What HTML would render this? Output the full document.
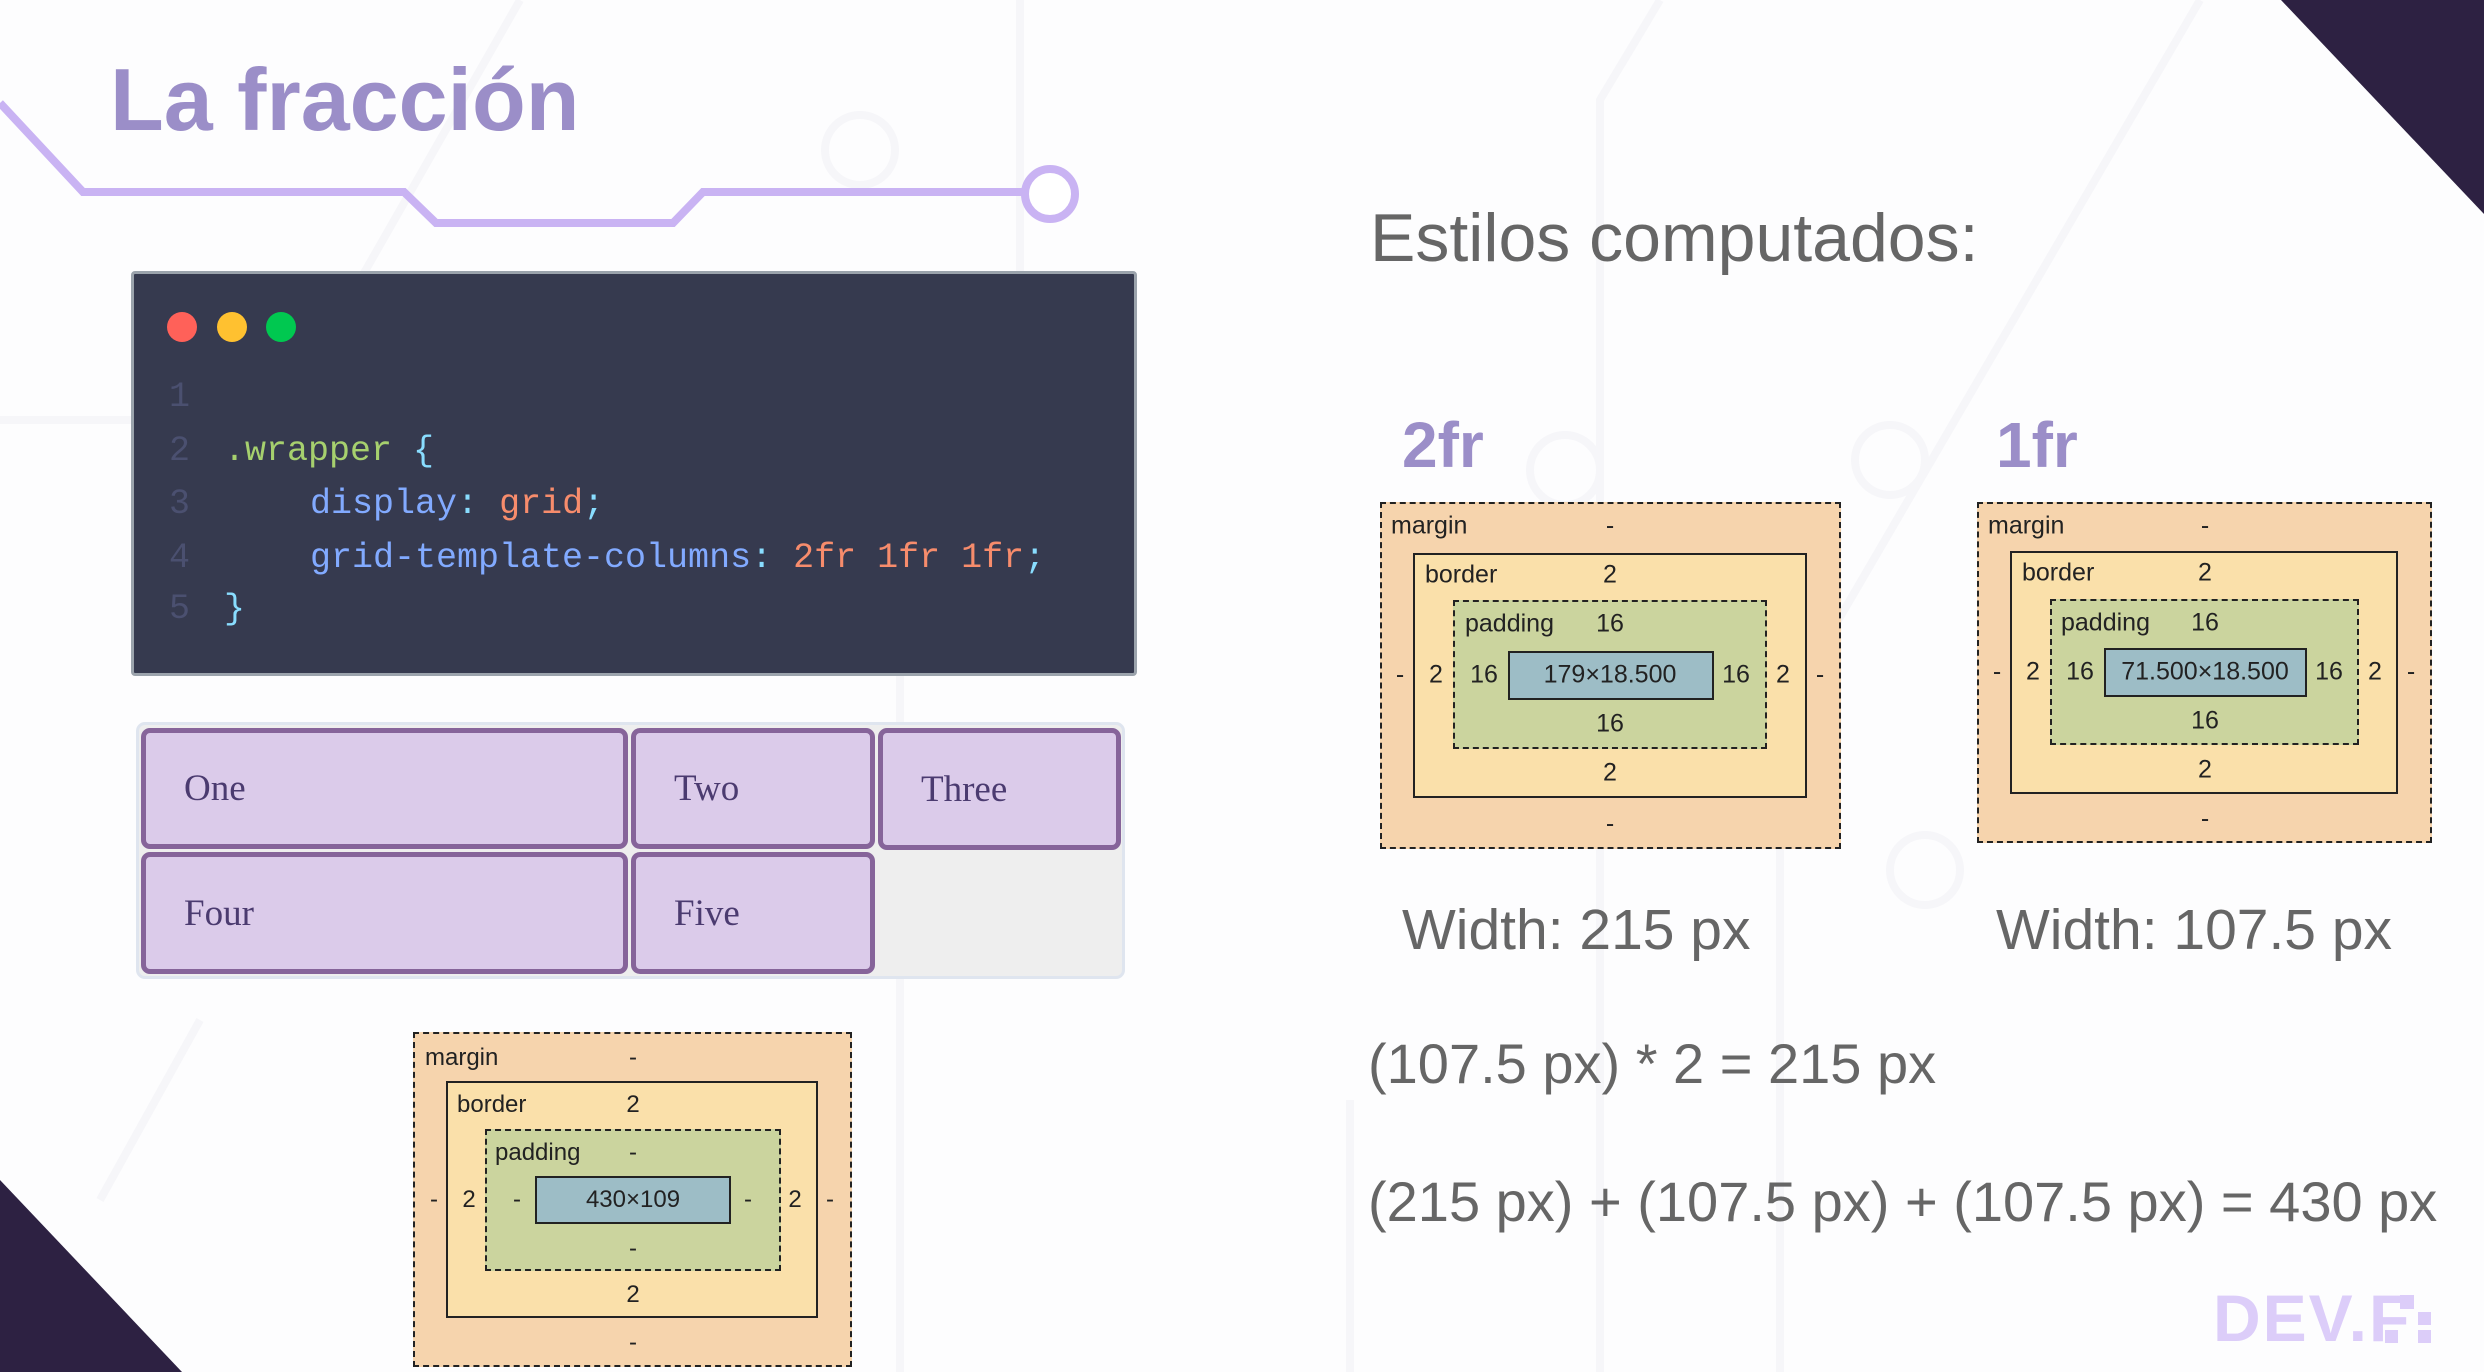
<!DOCTYPE html>
<html><head><meta charset="utf-8">
<style>
*{margin:0;padding:0;box-sizing:border-box}
body{width:2484px;height:1372px;overflow:hidden;background:#fdfdfe;position:relative;font-family:"Liberation Sans",sans-serif}
.a{position:absolute;white-space:nowrap}
.code{font-family:"Liberation Mono",monospace;font-size:35px;line-height:35px}
.cell{position:absolute;background:#dbcbea;border:5px solid #86649a;border-radius:9px;font-family:"Liberation Serif",serif;font-size:37px;color:#4b3b70;padding-left:38px;display:flex;align-items:center}
.bm{position:absolute;font-size:24px;color:#222}
.bm .t{position:absolute;line-height:1;transform:translateY(-50%)}
.c{transform:translate(-50%,-50%)!important}
</style></head><body>
<svg class="a" style="left:0;top:0" width="2484" height="1372">
<g stroke="#f6f6f9" stroke-width="8" fill="none">
<path d="M1020 0 L1020 330 L900 560 L900 1372"/>
<path d="M1660 0 L1600 100 L1600 1372"/>
<path d="M520 0 L280 420 L0 420"/>
<path d="M2200 0 L1780 720 L1780 1372"/>
<path d="M1350 1100 L1350 1372"/>
<path d="M200 1020 L100 1200"/>
<circle cx="860" cy="150" r="35"/><circle cx="1890" cy="460" r="35"/><circle cx="1925" cy="870" r="35"/><circle cx="1565" cy="470" r="35"/>
</g>
</svg>
<svg class="a" style="left:0;top:0" width="2484" height="1372">
<polygon points="2281,0 2484,0 2484,214" fill="#2d2142"/>
<polygon points="0,1180 0,1372 182,1372" fill="#2d2142"/>
<polyline points="0,103 83,192 404,192 436,223 673,223 703,192 1025,192" fill="none" stroke="#c9b3f3" stroke-width="8"/>
<circle cx="1050" cy="194" r="25" fill="#fff" stroke="#c9b3f3" stroke-width="8"/>
</svg>
<div class="a" style="left:110px;top:50px;font-size:88px;font-weight:bold;color:#9b8ec8;line-height:100px">La fracción</div>

<div class="a" style="left:131px;top:271px;width:1006px;height:405px;background:#363a4f;border:3px solid #9ba3ac;border-radius:4px"></div>
<div class="a" style="left:167px;top:312px;width:30px;height:30px;border-radius:50%;background:#ff6159"></div>
<div class="a" style="left:217px;top:312px;width:30px;height:30px;border-radius:50%;background:#ffc130"></div>
<div class="a" style="left:266px;top:312px;width:30px;height:30px;border-radius:50%;background:#00c850"></div>
<div class="a code" style="left:169px;top:380px;color:#4b5070">1</div>
<div class="a code" style="left:169px;top:434px;color:#4b5070">2</div>
<div class="a code" style="left:169px;top:487px;color:#4b5070">3</div>
<div class="a code" style="left:169px;top:541px;color:#4b5070">4</div>
<div class="a code" style="left:169px;top:592px;color:#4b5070">5</div>
<div class="a code" style="left:224px;top:434px"><span style="color:#a6d06e">.wrapper</span> <span style="color:#89ddff">{</span></div>
<div class="a code" style="left:310px;top:487px"><span style="color:#82aaff">display</span><span style="color:#89ddff">:</span> <span style="color:#f78c6c">grid</span><span style="color:#89ddff">;</span></div>
<div class="a code" style="left:310px;top:541px"><span style="color:#82aaff">grid-template-columns</span><span style="color:#89ddff">:</span> <span style="color:#f78c6c">2fr</span> <span style="color:#f78c6c">1fr</span> <span style="color:#f78c6c">1fr</span><span style="color:#89ddff">;</span></div>
<div class="a code" style="left:224px;top:592px;color:#89ddff">}</div>

<div class="a" style="left:136px;top:722px;width:989px;height:257px;background:#eeeeee;border:3px solid #dfe5ef;border-radius:9px"></div>
<div class="cell" style="left:141px;top:728px;width:487px;height:121px">One</div>
<div class="cell" style="left:631px;top:728px;width:244px;height:121px">Two</div>
<div class="cell" style="left:878px;top:728px;width:243px;height:122px">Three</div>
<div class="cell" style="left:141px;top:852px;width:487px;height:122px">Four</div>
<div class="cell" style="left:631px;top:852px;width:244px;height:122px">Five</div>

<div class="bm" style="left:413px;top:1032px;width:439px;height:335px;background:#f6d4ad;border:2px dashed #222"></div>
<div class="a" style="left:446px;top:1081px;width:372px;height:237px;background:#fae0aa;border:2px solid #222"></div>
<div class="a" style="left:485px;top:1129px;width:296px;height:142px;background:#cbd49e;border:2px dashed #222"></div>
<div class="a" style="left:535px;top:1176px;width:196px;height:48px;background:#9dbdc6;border:2px solid #222"></div>
<div class="bm" style="left:0;top:0">
<span class="t" style="left:425px;top:1058px">margin</span><span class="t c" style="left:633px;top:1058px">-</span>
<span class="t" style="left:457px;top:1105px">border</span><span class="t c" style="left:633px;top:1105px">2</span>
<span class="t" style="left:495px;top:1153px">padding</span><span class="t c" style="left:633px;top:1153px">-</span>
<span class="t c" style="left:633px;top:1200px">430×109</span>
<span class="t c" style="left:434px;top:1200px">-</span><span class="t c" style="left:469px;top:1200px">2</span><span class="t c" style="left:517px;top:1200px">-</span>
<span class="t c" style="left:748px;top:1200px">-</span><span class="t c" style="left:795px;top:1200px">2</span><span class="t c" style="left:830px;top:1200px">-</span>
<span class="t c" style="left:633px;top:1249px">-</span><span class="t c" style="left:633px;top:1295px">2</span><span class="t c" style="left:633px;top:1343px">-</span>
</div>

<div class="a" style="left:1370px;top:198px;font-size:68px;color:#666;line-height:80px">Estilos computados:</div>
<div class="a" style="left:1402px;top:405px;font-size:64px;font-weight:bold;color:#9b8ec8;line-height:80px">2fr</div>
<div class="a" style="left:1996px;top:405px;font-size:64px;font-weight:bold;color:#9b8ec8;line-height:80px">1fr</div>

<div class="a" style="left:1380px;top:502px;width:461px;height:347px;background:#f6d4ad;border:2px dashed #222"></div>
<div class="a" style="left:1413px;top:553px;width:394px;height:245px;background:#fae0aa;border:2px solid #222"></div>
<div class="a" style="left:1453px;top:600px;width:314px;height:149px;background:#cbd49e;border:2px dashed #222"></div>
<div class="a" style="left:1508px;top:651px;width:206px;height:49px;background:#9dbdc6;border:2px solid #222"></div>
<div class="bm" style="left:0;top:0;font-size:25px">
<span class="t" style="left:1391px;top:526px">margin</span><span class="t c" style="left:1610px;top:526px">-</span>
<span class="t" style="left:1425px;top:575px">border</span><span class="t c" style="left:1610px;top:575px">2</span>
<span class="t" style="left:1465px;top:624px">padding</span><span class="t c" style="left:1610px;top:624px">16</span>
<span class="t c" style="left:1610px;top:675px">179×18.500</span>
<span class="t c" style="left:1400px;top:675px">-</span><span class="t c" style="left:1436px;top:675px">2</span><span class="t c" style="left:1484px;top:675px">16</span>
<span class="t c" style="left:1736px;top:675px">16</span><span class="t c" style="left:1783px;top:675px">2</span><span class="t c" style="left:1820px;top:675px">-</span>
<span class="t c" style="left:1610px;top:724px">16</span><span class="t c" style="left:1610px;top:773px">2</span><span class="t c" style="left:1610px;top:824px">-</span>
</div>

<div class="a" style="left:1977px;top:502px;width:455px;height:341px;background:#f6d4ad;border:2px dashed #222"></div>
<div class="a" style="left:2010px;top:551px;width:388px;height:243px;background:#fae0aa;border:2px solid #222"></div>
<div class="a" style="left:2050px;top:599px;width:309px;height:146px;background:#cbd49e;border:2px dashed #222"></div>
<div class="a" style="left:2104px;top:648px;width:203px;height:49px;background:#9dbdc6;border:2px solid #222"></div>
<div class="bm" style="left:0;top:0;font-size:25px">
<span class="t" style="left:1988px;top:526px">margin</span><span class="t c" style="left:2205px;top:526px">-</span>
<span class="t" style="left:2022px;top:573px">border</span><span class="t c" style="left:2205px;top:573px">2</span>
<span class="t" style="left:2061px;top:623px">padding</span><span class="t c" style="left:2205px;top:623px">16</span>
<span class="t c" style="left:2205px;top:672px">71.500×18.500</span>
<span class="t c" style="left:1997px;top:672px">-</span><span class="t c" style="left:2033px;top:672px">2</span><span class="t c" style="left:2080px;top:672px">16</span>
<span class="t c" style="left:2329px;top:672px">16</span><span class="t c" style="left:2375px;top:672px">2</span><span class="t c" style="left:2411px;top:672px">-</span>
<span class="t c" style="left:2205px;top:721px">16</span><span class="t c" style="left:2205px;top:770px">2</span><span class="t c" style="left:2205px;top:819px">-</span>
</div>

<div class="a" style="left:1402px;top:895px;font-size:57px;color:#666;line-height:70px">Width: 215 px</div>
<div class="a" style="left:1996px;top:895px;font-size:57px;color:#666;line-height:70px">Width: 107.5 px</div>
<div class="a" style="left:1368px;top:1029px;font-size:56px;color:#666;line-height:70px">(107.5 px) * 2 = 215 px</div>
<div class="a" style="left:1368px;top:1167px;font-size:56px;color:#666;line-height:70px">(215 px) + (107.5 px) + (107.5 px) = 430 px</div>

<div class="a" style="left:2213px;top:1283px;font-size:66px;font-weight:bold;color:#dccdf9;line-height:70px;letter-spacing:2px">DEV.F</div>
<div class="a" style="left:2400px;top:1295px;width:14px;height:14px;background:#dccdf9"></div>
<div class="a" style="left:2418px;top:1312px;width:13px;height:13px;background:#dccdf9"></div>
<div class="a" style="left:2385px;top:1330px;width:13px;height:13px;background:#dccdf9"></div>
<div class="a" style="left:2418px;top:1330px;width:13px;height:13px;background:#dccdf9"></div>
</body></html>
